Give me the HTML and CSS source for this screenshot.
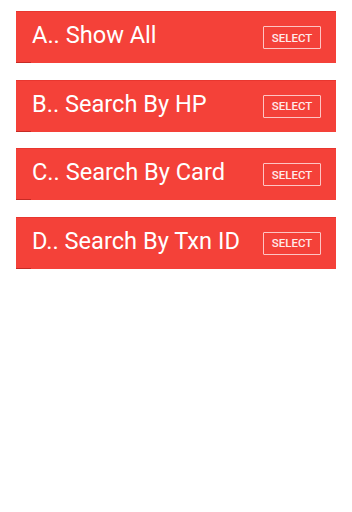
FILE: index.html
```html
<!DOCTYPE html>
<html>
<head>
<meta charset="utf-8">
<link rel="stylesheet" href="styles.css">
</head>
<body>
<div class="list">
  <div class="card"><span class="title">A.. Show All</span><button class="select">SELECT</button></div>
  <div class="card"><span class="title">B.. Search By HP</span><button class="select">SELECT</button></div>
  <div class="card"><span class="title">C.. Search By Card</span><button class="select">SELECT</button></div>
  <div class="card"><span class="title">D.. Search By Txn ID</span><button class="select">SELECT</button></div>
</div>
</body>
</html>
```
FILE: styles.css
```css
html, body {
  margin: 0;
  padding: 0;
  background: #ffffff;
  font-family: Roboto, "Liberation Sans", sans-serif;
}
.list {
  display: flex;
  flex-direction: column;
  gap: 16.5px;
  padding: 11px 16px 0 16px;
}
.card {
  position: relative;
  height: 52px;
  box-sizing: border-box;
  background: #f44139;
  border-top: 1px solid #e8362f;
  display: flex;
  align-items: center;
  justify-content: space-between;
  padding: 0 15px 0 16px;
}
.card::after {
  content: "";
  position: absolute;
  left: 0;
  bottom: 0;
  width: 15px;
  height: 1px;
  background: #c62a24;
}
.title {
  color: #ffffff;
  font-size: 23.6px;
  line-height: 28px;
  margin-top: -5px;
  letter-spacing: 0;
}
.select {
  width: 58px;
  height: 23px;
  box-sizing: border-box;
  background: transparent;
  border: 1px solid rgba(255, 220, 220, 0.85);
  border-radius: 1px;
  color: #ffeaea;
  font-family: Roboto, "Liberation Sans", sans-serif;
  font-size: 11.5px;
  font-weight: 500;
  padding: 0;
  margin-top: 0;
}
```
